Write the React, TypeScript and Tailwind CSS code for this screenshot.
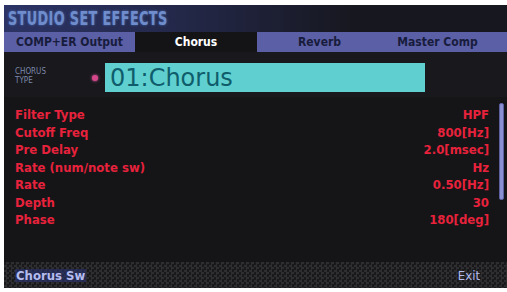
import React from "react";

const font = { fontFamily: '"Liberation Sans Narrow", "DejaVu Sans Condensed", "Liberation Sans", sans-serif' };

const params: [string, string][] = [
  ["Filter Type", "HPF"],
  ["Cutoff Freq", "800[Hz]"],
  ["Pre Delay", "2.0[msec]"],
  ["Rate (num/note sw)", "Hz"],
  ["Rate", "0.50[Hz]"],
  ["Depth", "30"],
  ["Phase", "180[deg]"],
];

export default function App() {
  return (
    <div className="w-[507px] h-[292px] bg-white overflow-hidden" style={font}>
      <div className="ml-[4px] mt-[5px] w-[503px] h-[283px] bg-[#151517] flex flex-col relative">
        {/* title */}
        <div className="h-[27px] flex items-center pl-[4px] bg-[linear-gradient(90deg,#2c3466_0%,#232849_35%,#17171f_70%)]">
          <span className="text-[19px] font-bold tracking-[0.5px] text-[#6f8dcc] leading-none scale-x-75 origin-left [text-shadow:0_0_3px_#4a6ab0]">
            STUDIO SET EFFECTS
          </span>
        </div>
        {/* tabs */}
        <div className="h-[20px] flex text-[12px] font-bold leading-none">
          <div className="w-[131px] bg-[#5b5fa6] flex items-center justify-center text-[#181c3c]">COMP+ER Output</div>
          <div className="w-[122px] bg-[#141417] flex items-center justify-center text-white">Chorus</div>
          <div className="w-[125px] bg-[#5b5fa6] flex items-center justify-center text-[#181c3c]">Reverb</div>
          <div className="flex-1 bg-[#5b5fa6] flex items-center justify-center pr-[14px] text-[#181c3c]">Master Comp</div>
        </div>
        {/* type row */}
        <div className="h-[45px] flex items-start pt-[11px] bg-[#18181d]">
          <div className="w-[80px] pl-[11px] pt-[4px] flex flex-col text-[8px] leading-[9px] text-[#7c88a8]">
            <span>CHORUS</span>
            <span>TYPE</span>
          </div>
          <div className="w-[21px] flex justify-center pt-[12px]">
            <div className="w-[6px] h-[6px] rounded-full bg-[#d5468a] shadow-[0_0_3px_#e060a0]"></div>
          </div>
          <div className="w-[320px] h-[29px] bg-[#5fd0cf] flex items-center pl-[5px]">
            <span className="text-[24px] leading-none text-[#0f5d6c]" style={{ fontFamily: '"DejaVu Sans", sans-serif' }}>
              01:Chorus
            </span>
          </div>
        </div>
        {/* params */}
        <div className="flex-1 pt-[9px] pl-[11px] pr-[18px] relative">
          {params.map(([k, v]) => (
            <div key={k} className="h-[17.5px] flex items-center justify-between text-[13px] font-bold text-[#e8223c] leading-none">
              <span>{k}</span>
              <span>{v}</span>
            </div>
          ))}
          <div className="absolute right-[3px] top-[6px] w-[5px] h-[97px] rounded-[2px] bg-[#8a90d2] border border-[#5a60a0]"></div>
        </div>
        {/* bottom bar */}
        <div className="h-[26px] flex items-center justify-between pl-[11px] pr-[27px] bg-[repeating-conic-gradient(#2e2e31_0_25%,#19191c_0_50%)] bg-[length:5px_5px] text-[13px] font-bold leading-none">
          <span className="text-[#b4bcef] bg-[#2a3270]/60 px-[1px]">Chorus Sw</span>
          <span className="text-[#b4bcef] font-normal">Exit</span>
        </div>
      </div>
    </div>
  );
}
